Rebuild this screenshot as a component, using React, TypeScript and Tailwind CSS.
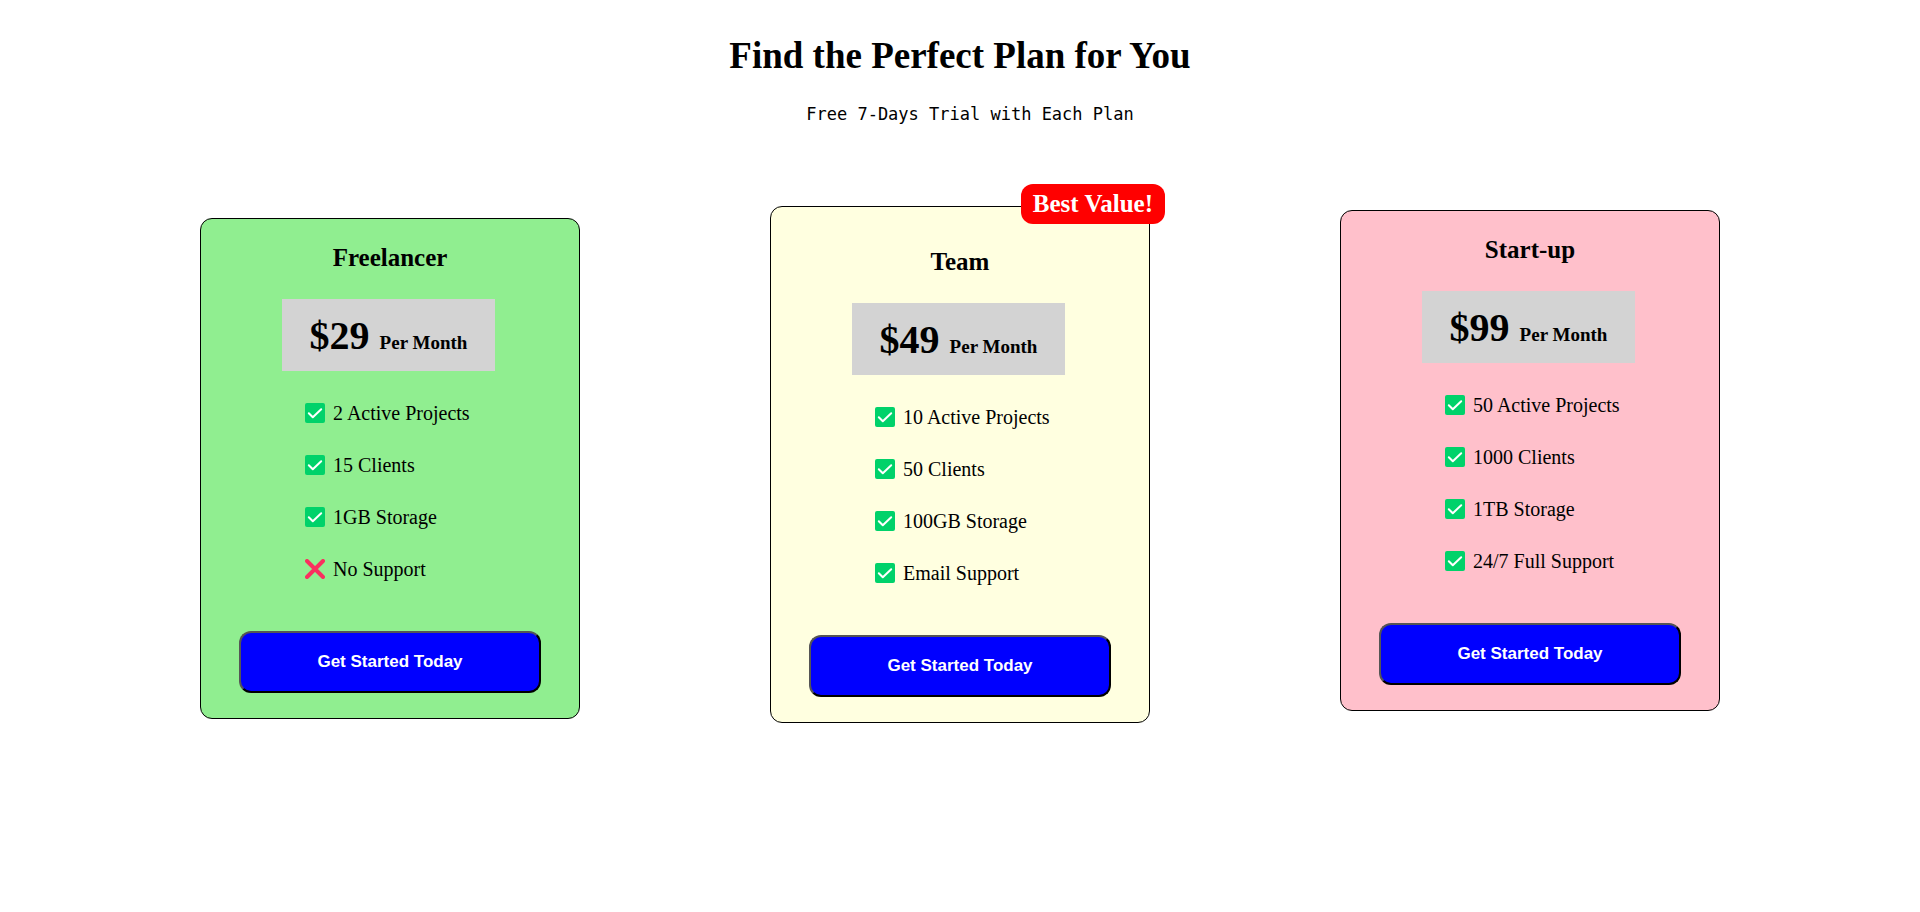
import React from "react";

type Feature = { label: string; included: boolean };

type Plan = {
  name: string;
  price: string;
  features: Feature[];
  cardClass: string;
  badge?: string;
};

const plans: Plan[] = [
  {
    name: "Freelancer",
    price: "$29",
    cardClass: "mt-3 bg-[#90ee90] pt-[23px]",
    features: [
      { label: "2 Active Projects", included: true },
      { label: "15 Clients", included: true },
      { label: "1GB Storage", included: true },
      { label: "No Support", included: false },
    ],
  },
  {
    name: "Team",
    price: "$49",
    cardClass: "bg-[#ffffe0] pt-[39px]",
    badge: "Best Value!",
    features: [
      { label: "10 Active Projects", included: true },
      { label: "50 Clients", included: true },
      { label: "100GB Storage", included: true },
      { label: "Email Support", included: true },
    ],
  },
  {
    name: "Start-up",
    price: "$99",
    cardClass: "mt-1 bg-[#ffc0cb] pt-[23px]",
    features: [
      { label: "50 Active Projects", included: true },
      { label: "1000 Clients", included: true },
      { label: "1TB Storage", included: true },
      { label: "24/7 Full Support", included: true },
    ],
  },
];

function CheckIcon() {
  return (
    <svg viewBox="0 0 20 20" className="size-5 shrink-0" aria-hidden="true">
      <rect width="20" height="20" rx="2" fill="#00d26a" />
      <path
        d="M3.8 10.2 L7.8 14.2 L16.2 6.2"
        fill="none"
        stroke="#fff"
        strokeWidth="2"
        strokeLinecap="round"
        strokeLinejoin="round"
      />
    </svg>
  );
}

function CrossIcon() {
  return (
    <svg viewBox="0 0 20 20" className="size-5 shrink-0" aria-hidden="true">
      <path
        d="M2 2 L18 18 M18 2 L2 18"
        fill="none"
        stroke="#fa2f5f"
        strokeWidth="4"
        strokeLinecap="round"
      />
    </svg>
  );
}

function PlanCard({ plan }: { plan: Plan }) {
  return (
    <section
      className={`relative flex w-[380px] flex-col items-center rounded-xl border border-black pb-[25px] ${plan.cardClass}`}
    >
      {plan.badge && (
        <span className="absolute -top-[23px] -right-4 rounded-xl bg-[#ff0000] px-3 py-1 text-[25px] leading-8 font-bold text-white">
          {plan.badge}
        </span>
      )}
      <h2 className="text-[25px] leading-8 font-bold">{plan.name}</h2>
      <p className="mt-[25px] mr-[3px] flex items-baseline gap-2.5 bg-[#d3d3d3] px-7 pt-[17px] pb-[15px] font-bold">
        <span className="text-[40px] leading-10">{plan.price}</span>
        <span className="text-[19px] leading-5">Per Month</span>
      </p>
      <ul className="mt-8 flex flex-col gap-8 self-stretch pl-[104px]">
        {plan.features.map((feature) => (
          <li key={feature.label} className="flex items-center gap-2 text-xl leading-5">
            {feature.included ? <CheckIcon /> : <CrossIcon />}
            {feature.label}
          </li>
        ))}
      </ul>
      <button
        type="button"
        className="mt-[52px] w-[302px] rounded-xl border-2 border-t-[#555] border-r-black border-b-black border-l-[#555] bg-[#0000ff] py-[19px] font-['Liberation_Sans',Arial,sans-serif] text-[17px] leading-5 font-bold text-white"
      >
        Get Started Today
      </button>
    </section>
  );
}

export default function App() {
  return (
    <main className="min-h-screen bg-white px-2.5 pt-8 pb-8 font-['Liberation_Serif','Times_New_Roman',serif] text-black">
      <header className="flex flex-col items-center text-center">
        <h1 className="text-[37px] leading-12 font-bold">Find the Perfect Plan for You</h1>
        <p className="mt-6 pl-5 font-['DejaVu_Sans_Mono',monospace] text-[17px] leading-5">
          Free 7-Days Trial with Each Plan
        </p>
      </header>
      <div className="mt-[82px] flex flex-wrap items-start justify-evenly">
        {plans.map((plan) => (
          <PlanCard key={plan.name} plan={plan} />
        ))}
      </div>
    </main>
  );
}
